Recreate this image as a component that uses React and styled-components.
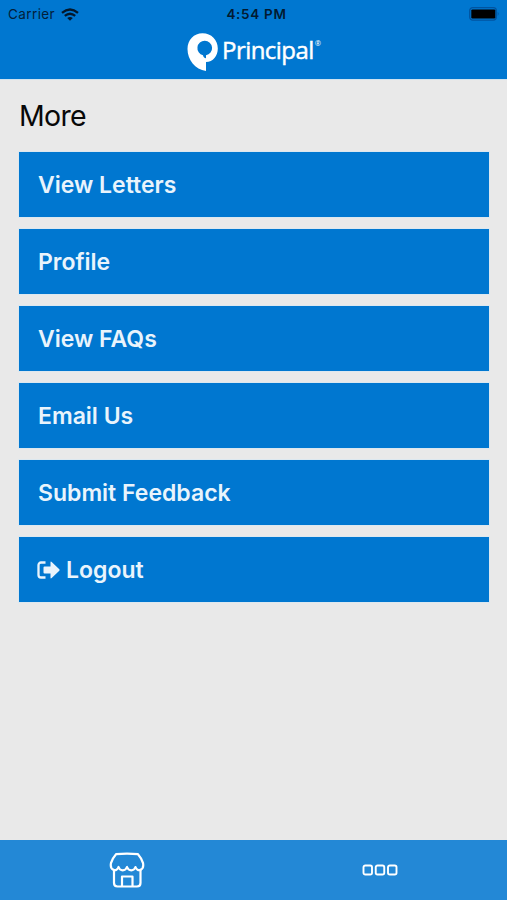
import React from "react";
import styled, { createGlobalStyle } from "styled-components";

const GlobalStyle = createGlobalStyle`
  * { box-sizing: border-box; }
  body { margin: 0; font-family: Inter, "Liberation Sans", sans-serif; background: #e9e9e9; }
`;

const Screen = styled.div`
  width: 507px;
  height: 900px;
  display: flex;
  flex-direction: column;
  background: #e9e9e9;
  overflow: hidden;
`;

const Header = styled.header`
  height: 79px;
  background: #0077d0;
  flex: none;
  box-shadow: 0 1px 0 #cfe3f0;
`;

const StatusBar = styled.div`
  height: 28px;
  padding: 0 7px 0 8px;
  display: grid;
  grid-template-columns: 1fr auto 1fr;
  align-items: center;
  color: #03203a;
  font-size: 13.5px;
  line-height: 28px;
`;

const Carrier = styled.div`
  display: flex;
  align-items: center;
  gap: 6px;
  letter-spacing: 0.4px;
`;

const Time = styled.div`
  padding-left: 5px;
  color: #021a30;
  font-size: 13.5px;
  font-weight: 600;
  letter-spacing: 0.7px;
`;

const Battery = styled.svg`
  justify-self: end;
`;

const Brand = styled.div`
  display: flex;
  height: 44px;
  padding: 5px 0 0 187px;
  color: #fff;
`;

const Wordmark = styled.span`
  margin-left: 3px;
  font-family: "Open Sans", sans-serif;
  font-size: 24px;
  line-height: 33px;
  letter-spacing: -0.55px;
  -webkit-text-stroke: 0.45px #fff;
`;

const Registered = styled.span`
  margin-left: 1px;
  font-family: "Open Sans", sans-serif;
  font-size: 7.5px;
  line-height: 21px;
`;

const Content = styled.main`
  flex: 1;
  padding: 0 18px 0 19px;
`;

const Title = styled.h1`
  margin: 0;
  height: 73px;
  line-height: 74px;
  font-size: 28.5px;
  font-weight: 400;
  letter-spacing: -0.7px;
  color: #080808;
`;

const Menu = styled.nav`
  display: flex;
  flex-direction: column;
  gap: 12px;
`;

const MenuItem = styled.button`
  height: 65px;
  padding: 0 19px;
  border: 0;
  display: flex;
  align-items: center;
  gap: 6px;
  background: #0077d0;
  box-shadow: 0 0 0 1px #dce8f0;
  color: #e9f4fc;
  font-family: inherit;
  font-size: 23px;
  font-weight: 600;
  text-align: left;
`;

const LogoutIcon = styled.svg`
  margin-left: -1px;
`;

const TabBar = styled.footer`
  height: 60px;
  flex: none;
  display: grid;
  grid-template-columns: 1fr 1fr;
  background: #2388d6;
`;

const Tab = styled.div`
  display: flex;
  align-items: center;
  justify-content: center;
`;

const ITEMS = ["View Letters", "Profile", "View FAQs", "Email Us", "Submit Feedback"];

export default function App() {
  return (
    <Screen>
      <GlobalStyle />
      <Header>
        <StatusBar>
          <Carrier>
            Carrier
            <svg width="18" height="13" viewBox="0 0 18 13" fill="none" stroke="#03182c" strokeWidth="2.3">
              <path d="M1 4.9Q9-1.9 17 4.9M3.8 7.9Q9 3.5 14.2 7.9" />
              <path d="M6.2 10Q9 7.8 11.8 10L9 12.7Z" fill="#03182c" stroke="none" />
            </svg>
          </Carrier>
          <Time>4:54 PM</Time>
          <Battery width="31" height="14" viewBox="0 0 31 14">
            <rect x="0.7" y="0.7" width="26.6" height="12.4" rx="3" fill="none" stroke="#0054a0" strokeWidth="1.3" />
            <rect x="2.3" y="2.4" width="24" height="9" rx="1.2" fill="#000" />
            <path d="M28.7 4.8Q30.6 6.8 28.7 9Z" fill="#0054a0" />
          </Battery>
        </StatusBar>
        <Brand>
          <svg width="32" height="39" viewBox="0 0 32 39" fill="#fff">
            <path d="M15.5 0.3C7 0.3 0.5 7 0.5 16c0 10.5 7.5 20.5 18.5 22V29C26 29 30.8 23 30.8 15.500C30.8 7 24.500 0.3 15.500 0.3Z" />
            <path d="M17.800 7.800A7.300 7.300 0 0 1 19 22.300V25.200C17.500 25 16 23.700 16 22.200A7.300 7.300 0 0 1 17.800 7.800Z" fill="#0077d0" />
          </svg>
          <Wordmark>Principal</Wordmark>
          <Registered>®</Registered>
        </Brand>
      </Header>
      <Content>
        <Title>More</Title>
        <Menu>
          {ITEMS.map((item) => <MenuItem key={item}>{item}</MenuItem>)}
          <MenuItem>
            <LogoutIcon width="23" height="18" viewBox="0 0 23 18">
              <path d="M8.500 1.500H4A2.500 2.500 0 0 0 1.500 4v10A2.500 2.500 0 0 0 4 16.500h4.500" fill="none" stroke="#e9f4fc" strokeWidth="2.300" />
              <path d="M7.500 5.500H13.500V1.500Q13.500 0 14.700 1L22.300 8.300Q23 9 22.300 9.700L14.700 17Q13.500 18 13.500 16.500V12.500H7.500Q6.500 12.500 6.500 11.500V6.500Q6.500 5.500 7.500 5.500Z" fill="#e9f4fc" />
            </LogoutIcon>
            Logout
          </MenuItem>
        </Menu>
      </Content>
      <TabBar>
        <Tab>
          <svg width="36" height="36" viewBox="0 0 36 36" fill="none" stroke="#fff" strokeWidth="2.2" strokeLinejoin="round">
            <path d="M7 2.200Q18 1 29 2.200Q32 5.500 34 11C35.500 18.500 28 20.500 26.500 15C25 19.500 19.500 19.500 18 15C16.500 19.500 11 19.500 9.500 15C8 20.500 0.500 18.500 2 11Q4 5.500 7 2.200Z" />
            <path d="M5 17.500V31Q5 34.500 8.500 34.500H28Q31.500 34.500 31.500 31V17.500M13 34V24.500H23.500V34" />
          </svg>
        </Tab>
        <Tab>
          <svg width="36" height="12" viewBox="0 0 36 12" fill="none" stroke="#fff" strokeWidth="1.9">
            <rect x="1.500" y="1.500" width="8.500" height="9" rx="1.800" />
            <rect x="13.750" y="1.500" width="8.500" height="9" rx="1.800" />
            <rect x="26" y="1.500" width="8.500" height="9" rx="1.800" />
          </svg>
        </Tab>
      </TabBar>
    </Screen>
  );
}
